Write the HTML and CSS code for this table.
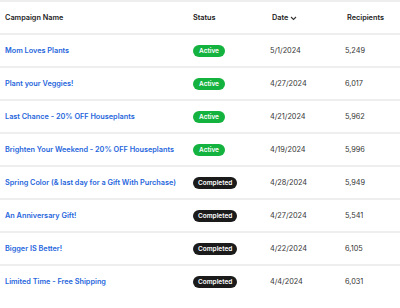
FILE: index.html
```html
<!DOCTYPE html>
<html>
<head>
<meta charset="utf-8">
<link rel="stylesheet" href="styles.css">
</head>
<body>
<div class="wrap">
<table class="campaigns">
  <thead>
    <tr>
      <th class="c-name">Campaign Name</th>
      <th class="c-status">Status</th>
      <th class="c-date"><span class="sort">Date <svg class="chev" width="7" height="5" viewBox="0 0 7 5"><path d="M1 1 L3.5 3.5 L6 1" fill="none" stroke="#333" stroke-width="1.1"/></svg></span></th>
      <th class="c-rec"><span class="sort">Recipients</span></th>
    </tr>
  </thead>
  <tbody>
    <tr><td><a href="#">Mom Loves Plants</a></td><td><span class="badge active">Active</span></td><td>5/1/2024</td><td>5,249</td></tr>
    <tr><td><a href="#">Plant your Veggies!</a></td><td><span class="badge active">Active</span></td><td>4/27/2024</td><td>6,017</td></tr>
    <tr><td><a href="#">Last Chance - 20% OFF Houseplants</a></td><td><span class="badge active">Active</span></td><td>4/21/2024</td><td>5,962</td></tr>
    <tr><td><a href="#">Brighten Your Weekend - 20% OFF Houseplants</a></td><td><span class="badge active">Active</span></td><td>4/19/2024</td><td>5,996</td></tr>
    <tr><td><a href="#">Spring Color (&amp; last day for a Gift With Purchase)</a></td><td><span class="badge done">Completed</span></td><td>4/28/2024</td><td>5,949</td></tr>
    <tr><td><a href="#">An Anniversary Gift!</a></td><td><span class="badge done">Completed</span></td><td>4/27/2024</td><td>5,541</td></tr>
    <tr><td><a href="#">Bigger IS Better!</a></td><td><span class="badge done">Completed</span></td><td>4/22/2024</td><td>6,105</td></tr>
    <tr class="last"><td><a href="#">Limited Time - Free Shipping</a></td><td><span class="badge done">Completed</span></td><td>4/4/2024</td><td>6,031</td></tr>
  </tbody>
</table>
</div>
</body>
</html>
```
FILE: styles.css
```css
html, body { margin: 0; padding: 0; background: #fff; }
body { font-family: Inter, "Liberation Sans", sans-serif; color: #222; }
.wrap { width: 400px; border-top: 2px solid #eeeeee; }
.campaigns { border-collapse: collapse; width: 400px; table-layout: fixed; }
.campaigns th, .campaigns td { text-align: left; padding: 0; height: 31px; vertical-align: middle; white-space: nowrap; font-size: 7.3px; }
.campaigns th { font-weight: 600; color: #222; }
.campaigns tr { border-bottom: 2px solid #eeeeee; }
.campaigns tr.last td { height: 31px; padding-bottom: 11px; }
.campaigns th:first-child, .campaigns td:first-child { padding-left: 5px; }
.c-name { width: 188px; }
.c-status { width: 77px; }
.c-date { width: 75px; }
.sort { padding-left: 2px; }
.campaigns td { color: #333; }
.campaigns a { color: #1f66dc; text-decoration: none; font-weight: 600; }
.chev { vertical-align: middle; margin-left: 0; }
.badge { display: inline-block; height: 12px; line-height: 12px; border-radius: 6px; padding: 0 5px; font-size: 6.5px; font-weight: 600; color: #fff; }
.badge.active { background: #14b23f; padding: 0 6px; }
.badge.done { background: #1b1b1b; }
```
